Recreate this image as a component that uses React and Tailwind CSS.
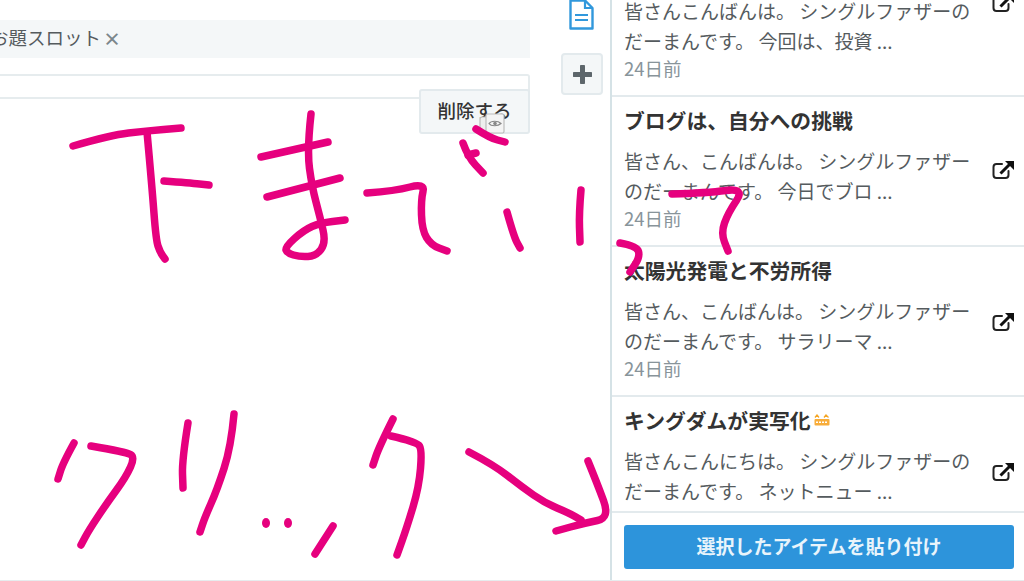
const smooth = (p) => {
  if (p.length < 3) return `M${p[0][0]} ${p[0][1]}L${p[1][0]} ${p[1][1]}`;
  let d = `M${p[0][0]} ${p[0][1]}`;
  for (let i = 1; i < p.length - 1; i++) {
    const mx = (p[i][0] + p[i + 1][0]) / 2;
    const my = (p[i][1] + p[i + 1][1]) / 2;
    d += `Q${p[i][0]} ${p[i][1]} ${mx} ${my}`;
  }
  const l = p[p.length - 1];
  return d + `L${l[0]} ${l[1]}`;
};

const strokes = [
  [[73,146],[111,135],[146,131],[181,128]],
  [[147,132],[152,187],[156,240],[160,252],[165,259]],
  [[164,181],[190,183],[209,185]],
  [[311,114],[307,150],[312,187],[320,217],[326,243],[316,256],[300,257],[287,253],[285,247],[304,230],[320,223],[345,220]],
  [[261,157],[328,142]],
  [[267,197],[340,178]],
  [[367,193],[395,191],[425,183],[421,200],[422,230],[431,245],[447,251]],
  [[476,129],[490,138],[505,142]],
  [[463,143],[468,157],[483,173]],
  [[468,155],[476,153]],
  [[507,212],[514,237],[520,248]],
  [[581,190],[579,213],[580,242]],
  [[672,194],[707,193],[745,188],[728,213],[721,233],[728,251]],
  [[620,243],[637,246],[640,257],[630,272]],
  [[74,443],[63,463],[58,479]],
  [[91,446],[126,452],[135,457],[126,477],[107,503],[89,530],[81,545]],
  [[188,423],[182,460],[183,488]],
  [[234,414],[231,447],[217,490],[205,517],[200,532]],
  [[333,526],[315,554]],
  [[393,419],[379,447],[373,465]],
  [[391,436],[417,442],[422,450],[419,487],[407,527],[397,555]],
  [[469,452],[494,465],[522,487],[545,503],[569,513],[581,520]],
  [[588,461],[597,483],[610,518],[585,523],[556,531]],
];

function Ink() {
  return (
    <svg className="absolute inset-0 pointer-events-none" width="1024" height="581" viewBox="0 0 1024 581" fill="none">
      {strokes.map((s, i) => (
        <path key={i} d={smooth(s)} stroke="#e6007e" strokeWidth="7.5" strokeLinecap="round" strokeLinejoin="round" />
      ))}
      <ellipse cx="266" cy="523" rx="4" ry="5" fill="#e6007e" />
      <ellipse cx="288" cy="523" rx="4" ry="5" fill="#e6007e" />
    </svg>
  );
}

function LinkIcon() {
  return (
    <svg width="22" height="20" viewBox="0 0 22 20" fill="none">
      <path d="M10 4H4.5C2.8 4 1.5 5.3 1.5 7v8c0 1.7 1.3 3 3 3h9c1.7 0 3-1.3 3-3v-4" stroke="#222" strokeWidth="2" strokeLinecap="round" />
      <path d="M8.5 13.5L17.5 4.5" stroke="#111" strokeWidth="3" />
      <path d="M13 1H22V10Z" fill="#111" />
    </svg>
  );
}

function Item({ title, emoji, l1, l2, date, iconClass, last }) {
  return (
    <div className={last ? "pl-[12px] pr-[10px]" : "border-b-2 border-[#e3eaed] pl-[12px] pr-[10px]"}>
      {title ? (
        <div className="mt-[8px] mb-[11px] h-[30px] flex items-center gap-[3px] text-[20.8px] font-bold leading-[30px] text-[#333333] whitespace-nowrap">
          {title}
          {emoji ? (
            <svg width="16" height="12" viewBox="0 0 16 12" fill="none">
              <path d="M1 3.5L3 1L5 3.5M10 3.5L12 1L14.5 3.5" stroke="#f5a623" strokeWidth="1.3" />
              <rect x="0.5" y="5" width="15" height="6.5" rx="1" fill="#f8ad3a" />
              <path d="M2 8.2H14" stroke="#fff" strokeWidth="1.5" strokeDasharray="2 1" />
            </svg>
          ) : null}
        </div>
      ) : null}
      <div className="flex justify-between">
        <div className="text-[19px] leading-[30px] text-[#555b5e] whitespace-nowrap">
          <div>{l1}</div>
          <div>{l2}</div>
        </div>
        <div className={iconClass}>
          <LinkIcon />
        </div>
      </div>
      {date ? <div className="h-[24px] mb-[15px] text-[18.5px] leading-[24px] text-[#88949a]">{date}</div> : null}
    </div>
  );
}

export default function App() {
  return (
    <div className="relative flex w-[1024px] h-[581px] overflow-hidden bg-white border-b border-[#e6ecee] font-['Noto_Sans_CJK_JP','Noto_Sans',sans-serif]">
      <div className="relative w-[530px] shrink-0 pt-[20px] overflow-hidden">
        <div className="flex items-center h-[38px] pb-[2px] bg-[#f4f7f8] pl-[1px] pr-2 text-[18.5px] text-[#555b5e] whitespace-nowrap">
          <span className="-ml-[11px]">お題スロット</span>
          <span className="ml-[2px] text-[18px] font-bold text-[#7b868b]">×</span>
        </div>
        <div className="mt-[16px] h-[25px] border-2 border-l-0 border-[#e6ecee] rounded-tr-[3px]" />
        <div className="absolute right-0 top-[89px] flex items-center justify-center w-[111px] h-[45px] pb-[2px] bg-[#f4f7f8] border-2 border-[#e3eaed] rounded-[3px] text-[18.5px] font-medium text-[#333333]">
          削除する
          <svg className="absolute left-[58px] top-[22px]" width="26" height="22" viewBox="0 0 26 22" fill="none">
            <rect x="1" y="4" width="16" height="14" rx="2" stroke="#bbbbbb" strokeWidth="1.2" fill="#eeeeee" />
            <rect x="7" y="1" width="18" height="19" rx="1.5" stroke="#bbbbbb" strokeWidth="1.2" fill="#f4f4f4" />
            <path d="M10 10.5C12 7.5 19 7.5 22 10.5C19 13.5 12 13.5 10 10.5Z" stroke="#888888" strokeWidth="1.2" />
            <circle cx="16" cy="10.5" r="1.8" fill="#888888" />
          </svg>
        </div>
      </div>

      <div className="w-[80px] shrink-0 pl-[31px]">
        <svg className="ml-[8px] -mt-[1px]" width="25" height="31" viewBox="0 0 25 31" fill="none">
          <path d="M1.5 1.5H16L23.5 9V29.5H1.5Z" stroke="#3198dc" strokeWidth="2.4" strokeLinejoin="round" />
          <path d="M16 1.5V9H23.5" stroke="#3198dc" strokeWidth="2.2" />
          <path d="M6 16H19M6 21H19" stroke="#3198dc" strokeWidth="2.2" />
        </svg>
        <div className="mt-[23px] flex items-center justify-center w-[42px] h-[42px] bg-[#f4f7f8] border-2 border-[#e3eaed] rounded-[4px]">
          <svg width="19" height="19" viewBox="0 0 19 19">
            <path d="M9.5 1.5V17.5M1.5 9.5H17.5" stroke="#5d666b" strokeWidth="5" strokeLinecap="round" />
          </svg>
        </div>
      </div>

      <div className="flex flex-col flex-1 min-w-0 border-l-2 border-[#d5e2e6]">
        <div className="h-[511px] shrink-0 overflow-hidden">
          <div className="-mt-[4px]">
            <Item l1="皆さんこんばんは。 シングルファザーの" l2="だーまんです。 今回は、投資 ..." date="24日前" iconClass="-mt-[3px]" />
            <Item title="ブログは、自分への挑戦" l1="皆さん、こんばんは。 シングルファザー" l2="のだーまんです。 今日でブロ ..." date="24日前" iconClass="mt-[14px]" />
            <Item title="太陽光発電と不労所得" l1="皆さん、こんばんは。 シングルファザー" l2="のだーまんです。 サラリーマ ..." date="24日前" iconClass="mt-[16px]" />
            <Item last title="キングダムが実写化" emoji l1="皆さんこんにちは。 シングルファザーの" l2="だーまんです。 ネットニュー ..." iconClass="mt-[16px]" />
          </div>
        </div>
        <div className="flex-1 border-t-2 border-[#e3eaed] pl-[12px] pr-[10px] pt-[12px]">
          <button className="w-full h-[44px] pb-[2px] rounded-[3px] bg-[#2d94db] text-[19px] font-bold text-[#e9f4fb]">
            選択したアイテムを貼り付け
          </button>
        </div>
      </div>

      <Ink />
    </div>
  );
}
